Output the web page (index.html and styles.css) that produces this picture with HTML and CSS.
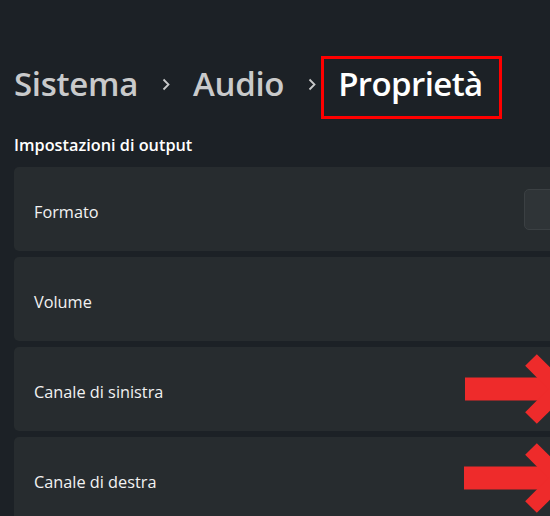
FILE: index.html
```html
<!DOCTYPE html>
<html lang="it">
<head>
<meta charset="utf-8">
<link rel="stylesheet" href="styles.css">
</head>
<body>
<div class="page">
  <nav class="crumbs">
    <span class="crumb">Sistema</span>
    <svg class="sep" viewBox="0 0 8 13" width="8" height="13"><polyline points="1.5,1.5 6.5,6.5 1.5,11.5" fill="none" stroke="#c9cacb" stroke-width="1.8"/></svg>
    <span class="crumb">Audio</span>
    <svg class="sep" viewBox="0 0 8 13" width="8" height="13"><polyline points="1.5,1.5 6.5,6.5 1.5,11.5" fill="none" stroke="#c9cacb" stroke-width="1.8"/></svg>
    <span class="crumb current">Proprietà</span>
  </nav>
  <h2 class="section">Impostazioni di output</h2>
  <div class="list">
    <div class="card">
      <span class="label">Formato</span>
      <div class="combo"></div>
    </div>
    <div class="card">
      <span class="label">Volume</span>
    </div>
    <div class="card">
      <span class="label">Canale di sinistra</span>
      <svg class="arrow" viewBox="0 0 90 70" width="90" height="70"><rect x="5" y="23.5" width="95" height="23" fill="#ee2b2b"/><polyline points="71,6 100,35 71,64" fill="none" stroke="#ee2b2b" stroke-width="16.5"/></svg>
    </div>
    <div class="card">
      <span class="label">Canale di destra</span>
      <svg class="arrow second" viewBox="0 0 90 70" width="90" height="70"><rect x="4" y="23.5" width="95" height="23" fill="#ee2b2b"/><polyline points="71,6 100,35 71,64" fill="none" stroke="#ee2b2b" stroke-width="16.5"/></svg>
    </div>
  </div>
</div>
</body>
</html>
```

FILE: styles.css
```css
html, body {
  margin: 0;
  padding: 0;
  overflow: hidden;
  background: #1c2126;
  width: 550px;
  height: 516px;
}
.page {
  padding: 56px 0 0 14px;
  font-family: "Open Sans", "Noto Sans", sans-serif;
}
.crumbs {
  display: flex;
  align-items: flex-start;
  height: 63px;
}
.crumb {
  font-size: 33px;
  font-weight: 600;
  color: #c9cacb;
  line-height: 45px;
  letter-spacing: -0.3px;
  margin-top: 5px;
}
.sep {
  margin: 22px 23px 0 24px;
  flex: none;
}
.crumb.current {
  color: #ffffff;
  border: 3px solid #ff0000;
  padding: 2px 16px 10px 14px;
  margin: 0 0 0 -18px;
  letter-spacing: -0.6px;
}
.section {
  margin: 16px 0 12px 0;
  font-size: 16.3px;
  line-height: 20px;
  font-weight: 600;
  color: #ffffff;
}
.list {
  display: flex;
  flex-direction: column;
  gap: 6px;
  width: 620px;
}
.card {
  position: relative;
  height: 84px;
  background: #272c2f;
  border-radius: 5px;
  display: flex;
  align-items: center;
  padding: 5px 0 0 20px;
  box-sizing: border-box;
}
.label {
  font-size: 16.3px;
  color: #f2f2f2;
  line-height: 22px;
}
.combo {
  position: absolute;
  left: 510px;
  top: 22px;
  width: 120px;
  height: 41px;
  box-sizing: border-box;
  background: #2f3437;
  border: 1px solid #3b4043;
  border-radius: 5px;
}
.arrow {
  position: absolute;
  left: 446px;
  top: 7px;
}
.arrow.second {
  top: 6px;
}
```
